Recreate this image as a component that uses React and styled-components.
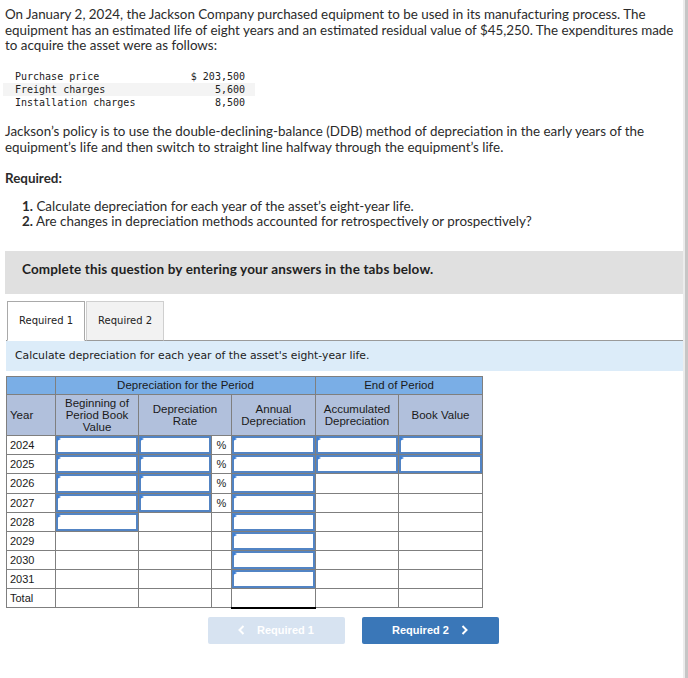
import React from 'react';
import styled, { createGlobalStyle } from 'styled-components';

const GlobalStyle = createGlobalStyle`
  html, body { margin: 0; padding: 0; background: #fff; }
  body { font-family: Lato, "Noto Sans", sans-serif; color: #2b2b2b; }
`;

const Page = styled.div`
  width: 688px;
  min-height: 678px;
  box-sizing: border-box;
  padding: 7px 2px 20px 5px;
  border-right: 3px solid #c6c6c6;
  box-shadow: inset -2px 0 0 #ececec;
`;

const Para = styled.p`
  margin: ${(p) => p.$top || 0}px 0 0;
  font-size: 13.4px;
  line-height: 15.5px;
`;

const Bold = styled.span`
  font-weight: 700;
`;

const CostTable = styled.table`
  margin: 16px 0 0 -2px;
  width: 252px;
  border-collapse: collapse;
  font-family: "DejaVu Sans Mono", "Liberation Mono", monospace;
  font-size: 10px;
  color: #222;
`;

const CostRow = styled.tr`
  background: ${(p) => (p.$shade ? '#f4f4f4' : 'transparent')};
`;

const CostLabel = styled.td`
  padding: 0 0 0 12px;
  height: 13px;
  line-height: 13px;
  white-space: pre;
`;

const CostValue = styled.td`
  padding: 0 10px 0 0;
  text-align: right;
  white-space: pre;
  line-height: 13px;
`;

const ReqList = styled.ol`
  list-style: none;
  margin: 12px 0 0;
  padding: 0 0 0 17px;
  font-size: 13.4px;
  line-height: 15.5px;
`;

const Notice = styled.div`
  margin-top: 21px;
  height: 43px;
  box-sizing: border-box;
  background: #e0e0e0;
  padding: 10px 0 0 17px;
  font-family: Lato, "Noto Sans", sans-serif;
  font-weight: 700;
  font-size: 13.5px;
  letter-spacing: 0.15px;
  line-height: 17px;
  color: #1f1f1f;
`;

const Tabs = styled.div`
  display: flex;
  gap: 1px;
  margin: 7px 0 0 2px;
  position: relative;
  z-index: 1;
`;

const Tab = styled.div`
  height: 40px;
  box-sizing: border-box;
  padding: 0 11px;
  display: flex;
  align-items: center;
  font-family: "DejaVu Sans", Verdana, sans-serif;
  font-size: 10px;
  color: #222;
  background: ${(p) => (p.$active ? '#fff' : '#f2f2f2')};
  border: 1px solid ${(p) => (p.$active ? '#a9a9a9' : '#cfcfcf')};
  border-bottom: ${(p) => (p.$active ? '1px solid #fff' : '1px solid #9a9a9a')};
  margin-bottom: -1px;
`;

const Instruction = styled.div`
  margin-left: 1px;
  height: 31px;
  box-sizing: border-box;
  border-top: 1px solid #9a9a9a;
  background: #dcecf9;
  padding: 0 0 0 9px;
  display: flex;
  align-items: center;
  font-family: "DejaVu Sans", Verdana, sans-serif;
  font-size: 10.8px;
  color: #222;
`;

const Grid = styled.table`
  margin: 5px 0 0 1px;
  width: 477px;
  table-layout: fixed;
  border-collapse: collapse;
  font-family: "Liberation Sans", Arial, sans-serif;
  color: #1a1a1a;
`;

const Head = styled.th`
  border: 1px solid #7f7f7f;
  background: ${(p) => (p.$top ? '#7aaee6' : '#b1c0dc')};
  font-weight: 400;
  font-size: 11.5px;
  line-height: 12px;
  height: ${(p) => (p.$top ? 17 : 40)}px;
  padding: 0;
  text-align: ${(p) => (p.$left ? 'left' : 'center')};
  padding-left: ${(p) => (p.$left ? '3px' : '0')};
`;

const Cell = styled.td`
  border: 1px solid #7f7f7f;
  padding: 0;
  height: ${(p) => (p.$tall ? 19 : 18)}px;
  font-size: 11px;
  line-height: 12px;
  text-align: ${(p) => (p.$center ? 'center' : 'left')};
  padding-left: ${(p) => (p.$pad ? '3px' : '0')};
  border-bottom: ${(p) => (p.$heavy ? '2px solid #000' : '1px solid #7f7f7f')};
`;

const EntryCell = styled.td`
  border: 1px solid #7f7f7f;
  padding: 0;
  position: relative;
  &::before {
    content: '';
    position: absolute;
    left: 1px;
    top: 1px;
    width: 0;
    height: 0;
    border-left: 4px solid #3d7fd6;
    border-top: 2.5px solid transparent;
    border-bottom: 2.5px solid transparent;
  }
`;

const Entry = styled.input`
  display: block;
  width: 100%;
  height: ${(p) => (p.$tall ? 19 : 18)}px;
  box-sizing: border-box;
  margin: 0;
  border: 2px solid #5284c4;
  background: #fff;
  outline: none;
  padding: 0 4px;
  font-size: 11px;
  font-family: inherit;
`;

const Buttons = styled.div`
  display: flex;
  justify-content: center;
  gap: 17px;
  margin-top: 8px;
  padding-left: 18px;
`;

const NavButton = styled.button`
  width: 137px;
  height: 27px;
  border: none;
  border-radius: 2px;
  background: ${(p) => (p.disabled ? '#d7e3f1' : '#3a77b8')};
  color: #fff;
  font-family: "Liberation Sans", Arial, sans-serif;
  font-weight: 700;
  font-size: 11px;
  display: flex;
  align-items: center;
  justify-content: center;
  gap: 12px;
  padding: 0;
`;

const Chevron = ({ dir }) => (
  <svg width="7" height="10" viewBox="0 0 7 10">
    <polyline
      points={dir === 'left' ? '5.5,1 1.5,5 5.5,9' : '1.5,1 5.5,5 1.5,9'}
      fill="none"
      stroke="#fff"
      strokeWidth="2"
    />
  </svg>
);

const rows = [
  { year: '2024', begin: true, rate: true, annual: true, end: true },
  { year: '2025', begin: true, rate: true, annual: true, end: true },
  { year: '2026', begin: true, rate: true, annual: true, tall: true },
  { year: '2027', begin: true, rate: true, annual: true },
  { year: '2028', begin: true, annual: true },
  { year: '2029', annual: true },
  { year: '2030', annual: true },
  { year: '2031', annual: true },
];

const Box = ({ on, tall }) =>
  on ? (
    <EntryCell>
      <Entry type="text" aria-label="answer" $tall={tall} />
    </EntryCell>
  ) : (
    <Cell $tall={tall} />
  );

export default function App() {
  return (
    <>
      <GlobalStyle />
      <Page>
        <Para>
          On January 2, 2024, the Jackson Company purchased equipment to be used in its manufacturing process. The
          equipment has an estimated life of eight years and an estimated residual value of $45,250. The expenditures
          made to acquire the asset were as follows:
        </Para>
        <CostTable>
          <tbody>
            <CostRow>
              <CostLabel>Purchase price</CostLabel>
              <CostValue>$ 203,500</CostValue>
            </CostRow>
            <CostRow $shade>
              <CostLabel>Freight charges</CostLabel>
              <CostValue>5,600</CostValue>
            </CostRow>
            <CostRow>
              <CostLabel>Installation charges</CostLabel>
              <CostValue>8,500</CostValue>
            </CostRow>
          </tbody>
        </CostTable>
        <Para $top={15.5}>
          Jackson’s policy is to use the double-declining-balance (DDB) method of depreciation in the early years of the
          equipment’s life and then switch to straight line halfway through the equipment’s life.
        </Para>
        <Para $top={16}>
          <Bold>Required:</Bold>
        </Para>
        <ReqList>
          <li>
            <Bold>1.</Bold> Calculate depreciation for each year of the asset’s eight-year life.
          </li>
          <li>
            <Bold>2.</Bold> Are changes in depreciation methods accounted for retrospectively or prospectively?
          </li>
        </ReqList>
        <Notice>Complete this question by entering your answers in the tabs below.</Notice>
        <Tabs>
          <Tab $active>Required 1</Tab>
          <Tab>Required 2</Tab>
        </Tabs>
        <Instruction>Calculate depreciation for each year of the asset's eight-year life.</Instruction>
        <Grid>
          <colgroup>
            <col style={{ width: 49 }} />
            <col style={{ width: 83 }} />
            <col style={{ width: 73 }} />
            <col style={{ width: 20 }} />
            <col style={{ width: 84 }} />
            <col style={{ width: 83 }} />
            <col style={{ width: 84 }} />
          </colgroup>
          <thead>
            <tr>
              <Head $top />
              <Head $top colSpan={4}>Depreciation for the Period</Head>
              <Head $top colSpan={2}>End of Period</Head>
            </tr>
            <tr>
              <Head $left>Year</Head>
              <Head>
                Beginning of
                <br />
                Period Book
                <br />
                Value
              </Head>
              <Head colSpan={2}>
                Depreciation
                <br />
                Rate
              </Head>
              <Head>
                Annual
                <br />
                Depreciation
              </Head>
              <Head>
                Accumulated
                <br />
                Depreciation
              </Head>
              <Head>Book Value</Head>
            </tr>
          </thead>
          <tbody>
            {rows.map((r) => (
              <tr key={r.year}>
                <Cell $pad $tall={r.tall}>{r.year}</Cell>
                <Box on={r.begin} tall={r.tall} />
                <Box on={r.rate} tall={r.tall} />
                <Cell $center $tall={r.tall}>{r.rate ? '%' : ''}</Cell>
                <Box on={r.annual} tall={r.tall} />
                <Box on={r.end} tall={r.tall} />
                <Box on={r.end} tall={r.tall} />
              </tr>
            ))}
            <tr>
              <Cell $pad>Total</Cell>
              <Cell />
              <Cell />
              <Cell />
              <Cell $heavy />
              <Cell />
              <Cell />
            </tr>
          </tbody>
        </Grid>
        <Buttons>
          <NavButton disabled>
            <Chevron dir="left" />
            Required 1
          </NavButton>
          <NavButton>
            Required 2
            <Chevron dir="right" />
          </NavButton>
        </Buttons>
      </Page>
    </>
  );
}
